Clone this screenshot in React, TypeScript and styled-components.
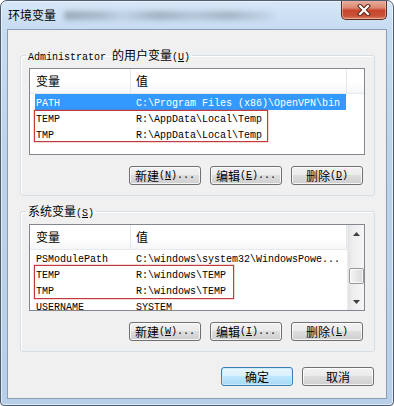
import React from 'react';
import styled, { createGlobalStyle } from 'styled-components';

const LAT = `"Liberation Mono", "DejaVu Sans Mono", monospace`;
const CJK = `"Noto Sans CJK SC", "Noto Sans CJK JP", sans-serif`;

const GlobalStyle = createGlobalStyle`
  html, body { margin: 0; padding: 0; background: #ffffff; }
  body { font-family: ${LAT}; color: #000; }
  * { box-sizing: border-box; }
`;

const Run = styled.span<{ $cjk?: boolean }>`
  font-family: ${(p) => (p.$cjk ? CJK : LAT)};
  font-size: ${(p) => (p.$cjk ? '12px' : '10px')};
  white-space: pre;
`;

const Key = styled.span`
  text-decoration: underline;
  text-underline-offset: 1px;
`;

const CJK_RE = /[\u3000-\u9fff\uff00-\uffef]+|[^\u3000-\u9fff\uff00-\uffef]+/g;

function Txt({ s }: { s: string }) {
  const parts = s.match(CJK_RE) || [];
  return (
    <>
      {parts.map((p, i) => (
        <Run key={i} $cjk={/[\u3000-\u9fff\uff00-\uffef]/.test(p)}>
          {p}
        </Run>
      ))}
    </>
  );
}

function Label({ pre, k, post }: { pre: string; k?: string; post?: string }) {
  return (
    <>
      <Txt s={pre} />
      {k && (
        <Run>
          (<Key>{k}</Key>){post}
        </Run>
      )}
    </>
  );
}

/* ---------- window chrome ---------- */

const Window = styled.div`
  width: 394px;
  height: 406px;
  border: 1px solid #4f5d6e;
  border-radius: 7px 7px 4px 4px;
  background: linear-gradient(180deg, #d6e7f7 0%, #c6dcf1 7%, #bcd3eb 40%, #b7cfe8 100%);
  box-shadow: inset 0 0 0 1px rgba(255, 255, 255, 0.55);
  display: flex;
  flex-direction: column;
  overflow: hidden;
`;

const TitleBar = styled.div`
  height: 28px;
  flex: none;
  display: flex;
  align-items: flex-start;
  padding-left: 7px;
`;

const TitleText = styled.div`
  height: 28px;
  line-height: 28px;
  display: flex;
  align-items: center;
`;

const TitleGhost = styled.div`
  width: 210px;
  height: 9px;
  margin: 10px 0 0 8px;
  filter: blur(2.5px);
  background: linear-gradient(
    90deg,
    rgba(70, 80, 95, 0.38) 0%,
    rgba(70, 80, 95, 0.25) 18%,
    rgba(70, 80, 95, 0.1) 28%,
    rgba(70, 80, 95, 0.32) 45%,
    rgba(70, 80, 95, 0.18) 62%,
    rgba(70, 80, 95, 0.3) 78%,
    rgba(70, 80, 95, 0.05) 100%
  );
  border-radius: 4px;
`;

const CloseBtn = styled.div`
  margin-left: auto;
  margin-right: 6px;
  margin-top: -1px;
  width: 46px;
  height: 20px;
  border: 1px solid #5b2a21;
  border-top: none;
  border-radius: 0 0 5px 5px;
  background: linear-gradient(180deg, #eab2a4 0%, #dc8a74 40%, #c9452c 55%, #c8523a 85%, #dd8a6c 100%);
  box-shadow: inset 0 0 0 1px rgba(255, 220, 210, 0.45);
  display: flex;
  align-items: center;
  justify-content: center;
`;

const Client = styled.div`
  flex: 1;
  margin: 0 6px 6px 6px;
  border: 1px solid #8a9db4;
  background: #f0f0f0;
  display: flex;
  flex-direction: column;
  padding: 18px 11px 0 12px;
`;

/* ---------- group box ---------- */

const Group = styled.fieldset<{ $top: number }>`
  margin: ${(p) => p.$top}px 0 0 0;
  padding: 6px 9px 10px 8px;
  border: 1px solid #d5dfe5;
  border-radius: 3px;
  box-shadow: inset 1px 1px 0 #ffffff;
  min-width: 0;
`;

const Legend = styled.legend`
  padding: 0 2px;
  margin-left: -3px;
  line-height: 14px;
  height: 14px;
  white-space: nowrap;
`;

/* ---------- list view ---------- */

const List = styled.div`
  height: 87px;
  border: 1px solid #828790;
  background: #ffffff;
  display: flex;
  overflow: hidden;
`;

const ListMain = styled.div`
  flex: 1;
  min-width: 0;
  display: flex;
  flex-direction: column;
`;

const Header = styled.div`
  height: 25px;
  flex: none;
  display: flex;
  border-bottom: 1px solid #e6e9ed;
  background: linear-gradient(180deg, #ffffff 0%, #ffffff 55%, #f5f6f8 100%);
`;

const HCell = styled.div<{ $w: number; $pad: number }>`
  width: ${(p) => p.$w}px;
  flex: none;
  border-right: 1px solid #e3e8ee;
  padding-left: ${(p) => p.$pad}px;
  display: flex;
  align-items: center;
  line-height: 16px;
`;

const HFill = styled.div`
  flex: 1;
`;

const Body = styled.div`
  position: relative;
  flex: 1;
  overflow: hidden;
`;

const RowEl = styled.div<{ $sel?: boolean }>`
  height: 16px;
  width: 311px;
  margin-left: 5px;
  display: flex;
  line-height: 16px;
  white-space: nowrap;
  background: ${(p) => (p.$sel ? '#3399ff' : 'transparent')};
  color: ${(p) => (p.$sel ? '#ffffff' : '#000000')};
`;

const Cell = styled.div<{ $w: number; $pad: number }>`
  width: ${(p) => p.$w}px;
  flex: none;
  padding-left: ${(p) => p.$pad}px;
  overflow: hidden;
`;

const Mark = styled.div`
  position: absolute;
  left: 4px;
  border: 1px solid #c43a3a;
  box-shadow: 0 0 0 0.5px rgba(200, 70, 70, 0.45);
  pointer-events: none;
`;

const VScroll = styled.div`
  width: 17px;
  flex: none;
  display: flex;
  flex-direction: column;
  background: linear-gradient(90deg, #e3e3e3 0%, #eeeeee 30%, #f6f6f6 100%);
  border-left: 1px solid #ececec;
`;

const ArrowBtn = styled.div`
  height: 17px;
  flex: none;
  display: flex;
  align-items: center;
  justify-content: center;
`;

const Track = styled.div`
  flex: 1;
  display: flex;
  justify-content: center;
  padding-top: 26px;
`;

const Thumb = styled.div`
  width: 15px;
  height: 16px;
  border: 1px solid #979797;
  border-radius: 2px;
  background: linear-gradient(90deg, #f4f4f4 0%, #e8e8e8 50%, #d9d9d9 100%);
  box-shadow: inset 0 0 0 1px rgba(255, 255, 255, 0.8);
`;

/* ---------- buttons ---------- */

const BtnRow = styled.div<{ $top: number; $right: number }>`
  display: flex;
  justify-content: flex-end;
  gap: 9px;
  margin-top: ${(p) => p.$top}px;
  padding-right: ${(p) => p.$right}px;
`;

const Btn = styled.div<{ $default?: boolean }>`
  width: 72px;
  height: 19px;
  border: 1px solid ${(p) => (p.$default ? '#3c7fb1' : '#707070')};
  border-radius: 3px;
  background: ${(p) =>
    p.$default
      ? 'linear-gradient(180deg, #eaf6fd 0%, #d9f0fc 45%, #bee6fd 50%, #a7d9f5 100%)'
      : 'linear-gradient(180deg, #f2f2f2 0%, #ebebeb 45%, #dddddd 50%, #cfcfcf 100%)'};
  box-shadow: inset 0 0 0 1px ${(p) => (p.$default ? 'rgba(200,235,255,0.9)' : 'rgba(255,255,255,0.75)')};
  display: flex;
  align-items: center;
  justify-content: center;
  line-height: 16px;
  white-space: nowrap;
`;

/* ---------- data ---------- */

type Row = [string, string];

const userRows: Row[] = [
  ['PATH', 'C:\\Program Files (x86)\\OpenVPN\\bin'],
  ['TEMP', 'R:\\AppData\\Local\\Temp'],
  ['TMP', 'R:\\AppData\\Local\\Temp'],
];

const sysRows: Row[] = [
  ['PSModulePath', 'C:\\windows\\system32\\WindowsPowe...'],
  ['TEMP', 'R:\\windows\\TEMP'],
  ['TMP', 'R:\\windows\\TEMP'],
  ['USERNAME', 'SYSTEM'],
];

function UpArrow() {
  return (
    <svg width="7" height="4" viewBox="0 0 7 4">
      <path d="M0 4 L3.5 0 L7 4 Z" fill="#404040" />
    </svg>
  );
}

function DownArrow() {
  return (
    <svg width="7" height="4" viewBox="0 0 7 4">
      <path d="M0 0 L3.5 4 L7 0 Z" fill="#404040" />
    </svg>
  );
}

function ListView({
  rows,
  selected,
  mark,
  scroll,
}: {
  rows: Row[];
  selected?: number;
  mark: { top: number; height: number; width: number };
  scroll?: boolean;
}) {
  return (
    <List>
      <ListMain>
        <Header>
          <HCell $w={101} $pad={6}>
            <Txt s="变量" />
          </HCell>
          <HCell $w={216} $pad={5}>
            <Txt s="值" />
          </HCell>
          <HFill />
        </Header>
        <Body>
          {rows.map((r, i) => (
            <RowEl key={i} $sel={i === selected}>
              <Cell $w={95} $pad={1}>
                <Run>{r[0]}</Run>
              </Cell>
              <Cell $w={216} $pad={6}>
                <Run>{r[1]}</Run>
              </Cell>
            </RowEl>
          ))}
          <Mark style={{ top: mark.top, height: mark.height, width: mark.width }} />
        </Body>
      </ListMain>
      {scroll && (
        <VScroll>
          <ArrowBtn>
            <UpArrow />
          </ArrowBtn>
          <Track>
            <Thumb />
          </Track>
          <ArrowBtn>
            <DownArrow />
          </ArrowBtn>
        </VScroll>
      )}
    </List>
  );
}

export default function App() {
  return (
    <>
      <GlobalStyle />
      <Window>
        <TitleBar>
          <TitleText>
            <Txt s="环境变量" />
          </TitleText>
          <TitleGhost />
          <CloseBtn>
            <svg width="14" height="12" viewBox="0 0 14 12">
              <path d="M3 2 L11 10 M11 2 L3 10" stroke="#5a2418" strokeWidth="4.2" strokeLinecap="square" />
              <path d="M3 2 L11 10 M11 2 L3 10" stroke="#ffffff" strokeWidth="2.2" strokeLinecap="square" />
            </svg>
          </CloseBtn>
        </TitleBar>
        <Client>
          <Group $top={0}>
            <Legend>
              <Label pre="Administrator 的用户变量" k="U" />
            </Legend>
            <ListView rows={userRows} selected={0} mark={{ top: 16, height: 32, width: 234 }} />
            <BtnRow $top={11} $right={2}>
              <Btn>
                <Label pre="新建" k="N" post="..." />
              </Btn>
              <Btn>
                <Label pre="编辑" k="E" post="..." />
              </Btn>
              <Btn>
                <Label pre="删除" k="D" />
              </Btn>
            </BtnRow>
          </Group>
          <Group $top={8}>
            <Legend>
              <Label pre="系统变量" k="S" />
            </Legend>
            <ListView rows={sysRows} mark={{ top: 15, height: 34, width: 200 }} scroll />
            <BtnRow $top={11} $right={2}>
              <Btn>
                <Label pre="新建" k="W" post="..." />
              </Btn>
              <Btn>
                <Label pre="编辑" k="I" post="..." />
              </Btn>
              <Btn>
                <Label pre="删除" k="L" />
              </Btn>
            </BtnRow>
          </Group>
          <BtnRow $top={15} $right={1}>
            <Btn $default>
              <Txt s="确定" />
            </Btn>
            <Btn>
              <Txt s="取消" />
            </Btn>
          </BtnRow>
        </Client>
      </Window>
    </>
  );
}
